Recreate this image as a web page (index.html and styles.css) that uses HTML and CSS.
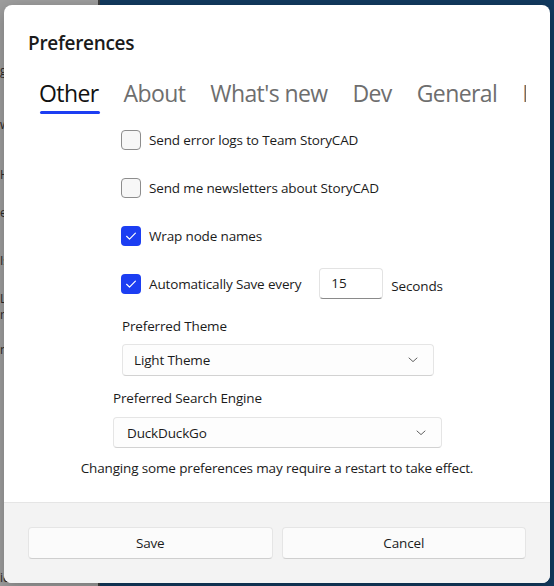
FILE: index.html
```html
<!DOCTYPE html>
<html lang="en">
<head>
<meta charset="utf-8">
<title>Preferences</title>
<link rel="stylesheet" href="styles.css">
</head>
<body>
<div class="desktop">
  <aside class="side">
    <div class="frag f1"><u>g</u>e</div>
    <div class="frag f2">wh</div>
    <div class="frag f3">Ho</div>
    <div class="frag f4">en</div>
    <div class="frag f5">Is</div>
    <div class="frag f6">Li</div>
    <div class="frag f7">ro</div>
    <div class="frag f8">no</div>
    <div class="frag f9">ic</div>
  </aside>
  <div class="divider"></div>
  <main class="app"></main>
</div>

<div class="dialog" role="dialog" aria-label="Preferences">
  <div class="dlg-body">
    <h1 class="title">Preferences</h1>
    <nav class="tabs">
      <span class="tab active">Other</span>
      <span class="tab">About</span>
      <span class="tab">What's new</span>
      <span class="tab">Dev</span>
      <span class="tab">General</span>
      <span class="tab">Backup</span>
    </nav>
    <section class="pane">
      <div class="check-row">
        <span class="box"></span>
        <span class="check-label">Send error logs to Team StoryCAD</span>
      </div>
      <div class="check-row">
        <span class="box"></span>
        <span class="check-label">Send me newsletters about StoryCAD</span>
      </div>
      <div class="check-row">
        <span class="box checked"><svg viewBox="0 0 20 20" width="20" height="20"><path d="M5.6 10.3 L8.5 13.1 L14.4 7.1" fill="none" stroke="#fff" stroke-width="1.2" stroke-linecap="round" stroke-linejoin="round"/></svg></span>
        <span class="check-label">Wrap node names</span>
      </div>
      <div class="check-row last">
        <span class="box checked"><svg viewBox="0 0 20 20" width="20" height="20"><path d="M5.6 10.3 L8.5 13.1 L14.4 7.1" fill="none" stroke="#fff" stroke-width="1.2" stroke-linecap="round" stroke-linejoin="round"/></svg></span>
        <span class="check-label">Automatically Save every</span>
        <span class="numbox">15</span>
        <span class="unit">Seconds</span>
      </div>

      <div class="field-label theme-label">Preferred Theme</div>
      <div class="combo theme-combo">
        <span>Light Theme</span>
        <svg class="chev" viewBox="0 0 10 6" width="10" height="6"><path d="M1 1 L5 4.6 L9 1" fill="none" stroke="#606060" stroke-width="1" stroke-linecap="round" stroke-linejoin="round"/></svg>
      </div>

      <div class="field-label search-label">Preferred Search Engine</div>
      <div class="combo search-combo">
        <span>DuckDuckGo</span>
        <svg class="chev" viewBox="0 0 10 6" width="10" height="6"><path d="M1 1 L5 4.6 L9 1" fill="none" stroke="#606060" stroke-width="1" stroke-linecap="round" stroke-linejoin="round"/></svg>
      </div>

      <p class="note">Changing some preferences may require a restart to take effect.</p>
    </section>
  </div>
  <footer class="dlg-footer">
    <button class="btn">Save</button>
    <button class="btn">Cancel</button>
  </footer>
</div>
</body>
</html>
```

FILE: styles.css
```css
html, body {
  margin: 0;
  padding: 0;
}

body {
  width: 554px;
  height: 586px;
  overflow: hidden;
  position: relative;
  font-family: "Open Sans", "Noto Sans", sans-serif;
  color: #1b1b1b;
}

.desktop {
  display: flex;
  height: 586px;
}

.side {
  width: 98px;
  flex: none;
  background: #9e9e9e;
  color: #2a2a2a;
  font-size: 12px;
  line-height: 14px;
  padding-left: 0;
  box-sizing: border-box;
}

.frag { white-space: nowrap; }
.f1 { margin-top: 64px; }
.f2 { margin-top: 40px; }
.f3 { margin-top: 36px; }
.f4 { margin-top: 24px; }
.f5 { margin-top: 34px; }
.f6 { margin-top: 24px; }
.f7 { margin-top: 2px; }
.f8 { margin-top: 21px; }
.f9 { margin-top: 214px; }

.divider {
  width: 2px;
  flex: none;
  background: #3d3d3d;
}

.app {
  flex: 1;
  background: #123a5f;
}

/* dialog */
.dialog {
  position: absolute;
  left: 4px;
  top: 5px;
  width: 546px;
  height: 578px;
  background: #ffffff;
  border-radius: 8px;
  overflow: hidden;
  display: flex;
  flex-direction: column;
  box-shadow: 0 4px 16px rgba(0, 0, 0, 0.25);
}

.dlg-body {
  flex: 1;
  padding: 24px 24px 0;
}

.title {
  margin: 0;
  font-size: 19px;
  letter-spacing: -0.3px;
  line-height: 28px;
  font-weight: 600;
  color: #1b1b1b;
}

.tabs {
  margin-top: 20px;
  display: flex;
  gap: 25px;
  padding-left: 11px;
  height: 37px;
  overflow: hidden;
  white-space: nowrap;
}

.tab {
  position: relative;
  flex: none;
  font-size: 23px;
  letter-spacing: -0.6px;
  line-height: 32px;
  color: #6e6e6e;
}

.tab.active {
  color: #111111;
}

.tab.active::after {
  content: "";
  position: absolute;
  left: 1px;
  right: -1px;
  top: 34px;
  height: 3px;
  border-radius: 2px;
  background: #1c3ef2;
}

.pane {
  margin-top: 10px;
  font-size: 13.5px;
  letter-spacing: -0.15px;
}

.check-row {
  display: flex;
  align-items: center;
  height: 32px;
  margin: 0 0 16px 93px;
}

.box {
  width: 20px;
  height: 20px;
  box-sizing: border-box;
  border: 1px solid #8d8d8d;
  border-radius: 4px;
  background: #f7f7f7;
  flex: none;
  margin-right: 8px;
  display: flex;
}

.box.checked {
  border: none;
  background: #1c3ef2;
}

.check-label {
  line-height: 20px;
  color: #1b1b1b;
}

.numbox {
  width: 64px;
  height: 31px;
  box-sizing: border-box;
  margin-left: 18px;
  padding-left: 11px;
  border: 1px solid #e3e3e3;
  border-bottom-color: #8a8a8a;
  border-radius: 4px;
  background: #ffffff;
  line-height: 29px;
  align-self: flex-start;
}

.unit {
  margin-left: 8px;
  margin-top: 3px;
}

.field-label {
  line-height: 20px;
  color: #1b1b1b;
}

.theme-label { margin-left: 94px; }

.combo {
  display: flex;
  align-items: center;
  justify-content: space-between;
  box-sizing: border-box;
  border: 1px solid #e5e5e5;
  border-bottom-color: #d2d2d2;
  border-radius: 4px;
  background: #fdfdfd;
}

.theme-combo {
  margin: 8px 0 0 94px;
  width: 312px;
  height: 32px;
  padding: 0 15px 0 11px;
}

.search-label {
  margin: 12px 0 0 85px;
}

.search-combo {
  margin: 9px 0 0 85px;
  width: 329px;
  height: 31px;
  padding: 0 15px 0 13px;
}

.chev { flex: none; }

.note {
  margin: 10px 0 0;
  line-height: 20px;
  text-align: center;
  color: #1b1b1b;
}

.dlg-footer {
  flex: none;
  height: 81px;
  box-sizing: border-box;
  border-top: 1px solid #e5e5e5;
  background: #f3f3f3;
  padding: 24px;
  display: grid;
  grid-template-columns: 1fr 1fr;
  column-gap: 9px;
}

.btn {
  height: 32px;
  box-sizing: border-box;
  border: 1px solid #e5e5e5;
  border-bottom-color: #cfcfcf;
  border-radius: 4px;
  background: #fbfbfb;
  font-family: inherit;
  font-size: 13.5px;
  letter-spacing: -0.15px;
  color: #1b1b1b;
  padding: 0;
}
```
